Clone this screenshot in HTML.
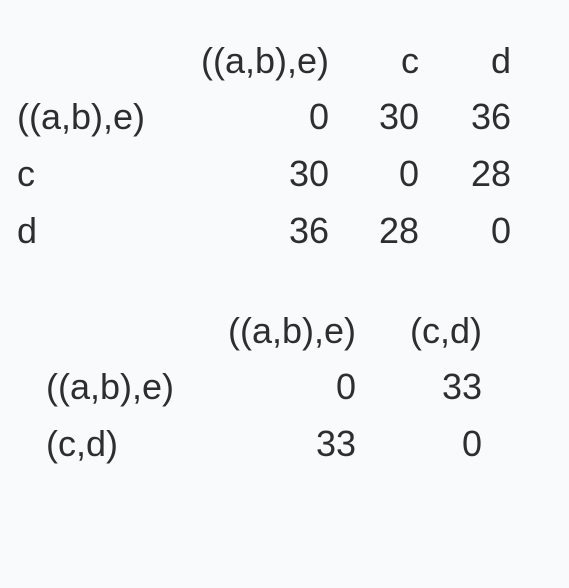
<!DOCTYPE html>
<html><head><style>
html,body{margin:0;padding:0;}
body{width:569px;height:588px;background:#f9fafb;position:relative;overflow:hidden;font-family:"Liberation Sans",sans-serif;font-size:36px;color:#2e2e2e;}
.t{position:absolute;line-height:40px;white-space:nowrap;}
.r{text-align:right;}
</style></head><body>
<div class="t r" style="right:240px;top:41px">((a,b),e)</div>
<div class="t r" style="right:150px;top:41px">c</div>
<div class="t r" style="right:58px;top:41px">d</div>

<div class="t" style="left:17px;top:97px">((a,b),e)</div>
<div class="t r" style="right:240px;top:97px">0</div>
<div class="t r" style="right:150px;top:97px">30</div>
<div class="t r" style="right:58px;top:97px">36</div>

<div class="t" style="left:17px;top:154px">c</div>
<div class="t r" style="right:240px;top:154px">30</div>
<div class="t r" style="right:150px;top:154px">0</div>
<div class="t r" style="right:58px;top:154px">28</div>

<div class="t" style="left:17px;top:211px">d</div>
<div class="t r" style="right:240px;top:211px">36</div>
<div class="t r" style="right:150px;top:211px">28</div>
<div class="t r" style="right:58px;top:211px">0</div>

<div class="t r" style="right:213px;top:311px">((a,b),e)</div>
<div class="t r" style="right:87px;top:311px">(c,d)</div>

<div class="t" style="left:46px;top:367px">((a,b),e)</div>
<div class="t r" style="right:213px;top:367px">0</div>
<div class="t r" style="right:87px;top:367px">33</div>

<div class="t" style="left:46px;top:424px">(c,d)</div>
<div class="t r" style="right:213px;top:424px">33</div>
<div class="t r" style="right:87px;top:424px">0</div>
</body></html>
